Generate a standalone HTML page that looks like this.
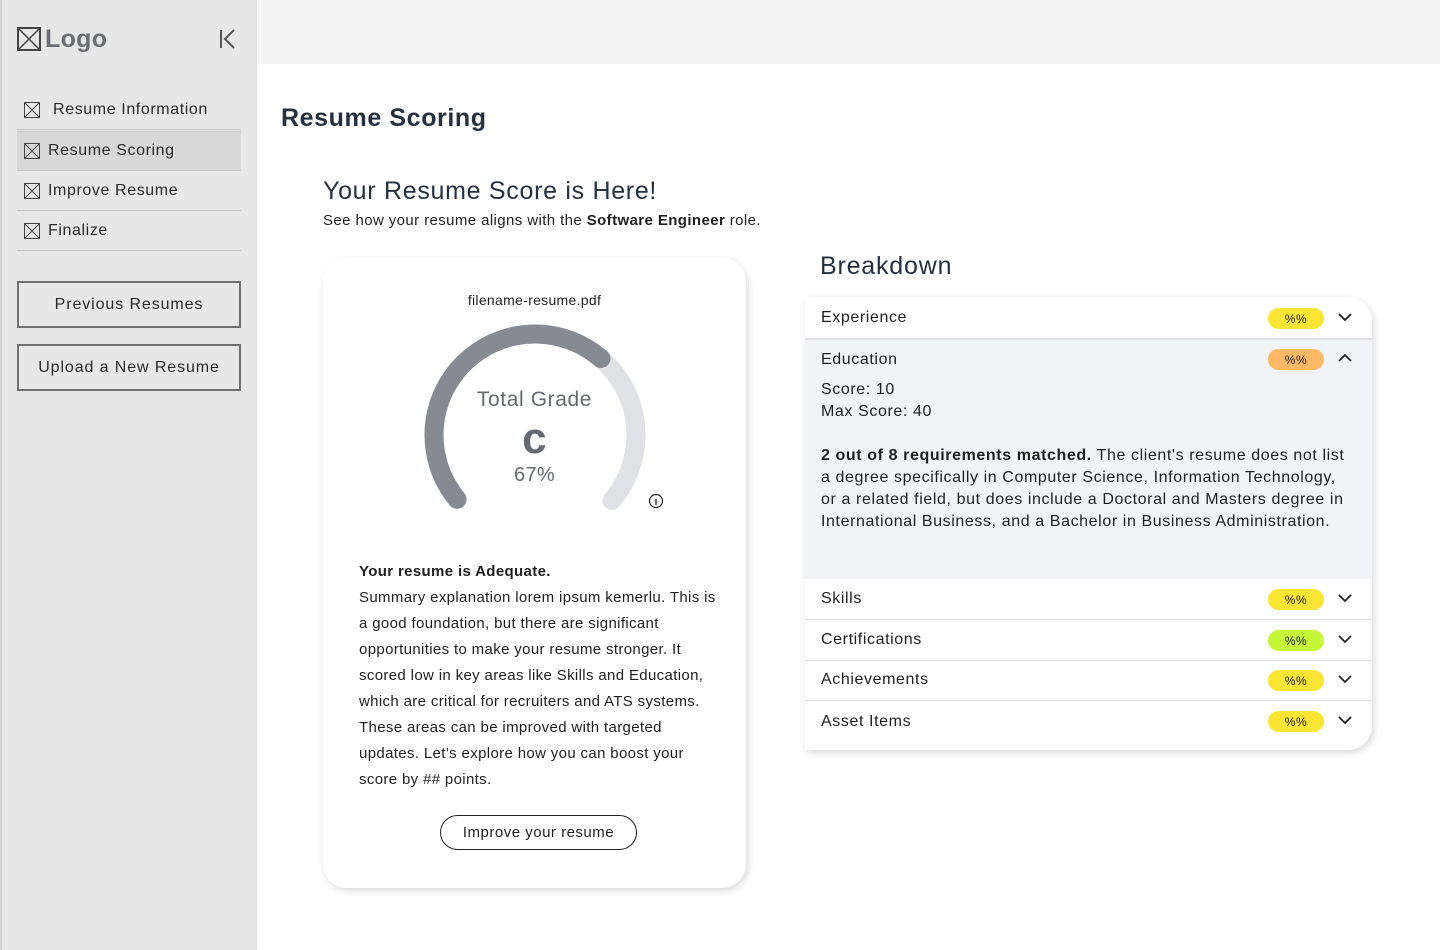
<!DOCTYPE html><html><head><style>
*{box-sizing:border-box;margin:0;padding:0}
body{width:1440px;height:950px;position:relative;background:#fff;font-family:"Liberation Sans",sans-serif;color:#1f1f1f;overflow:hidden;letter-spacing:.3px}
.side{position:absolute;left:0;top:0;width:257px;height:950px;background:#e7e7e7;border-left:2px solid #d5d5d5;border-right:1px solid #ddd}
.top{position:absolute;left:257px;top:0;right:0;height:64px;background:#f4f4f4}
.ab{position:absolute}
.nav{position:absolute;left:17px;width:224px;height:40px;border-bottom:1px solid #c4c4c4;font-size:16px;display:flex;align-items:center;padding-left:7px;color:#2a2a2a;letter-spacing:.6px}
.nav svg{margin-right:8px}
.btn{position:absolute;left:17px;width:224px;height:47px;border:2px solid #707070;font-size:16px;display:flex;align-items:center;justify-content:center;letter-spacing:.9px;color:#2a2a2a}
.row{position:absolute;left:805px;width:567px;height:41px;border-bottom:1px solid #ddd;font-size:16px;display:flex;align-items:center;padding-left:16px;letter-spacing:.6px}
.pill{position:absolute;left:463px;top:10px;width:56px;height:21px;border-radius:11px;font-size:12px;display:flex;align-items:center;justify-content:center}
.chev{position:absolute;left:532px;top:13px}
</style></head><body>
<div class="side"></div>
<div class="top"></div>
<svg class="ab" style="left:17px;top:27px" width="24" height="24"><rect x="1" y="1" width="22" height="22" fill="none" stroke="#444" stroke-width="2"/><path d="M1 1L23 23M23 1L1 23" stroke="#444" stroke-width="1.5"/></svg>
<div class="ab" style="left:45px;top:25px;font-size:25px;font-weight:bold;color:#6b6e73">Logo</div>
<svg class="ab" style="left:219px;top:29px" width="18" height="20"><path d="M2 1V19M15 1L6 10L15 19" fill="none" stroke="#555" stroke-width="2"/></svg>
<div class="nav" style="top:90px"><svg width="16" height="16"><rect x=".5" y=".5" width="15" height="15" fill="none" stroke="#444"/><path d="M1 1L15 15M15 1L1 15" stroke="#444"/></svg>&nbsp;Resume Information</div>
<div class="nav" style="top:131px;background:#d8d8d8;border-top:1px solid #c4c4c4"><svg width="16" height="16"><rect x=".5" y=".5" width="15" height="15" fill="none" stroke="#444"/><path d="M1 1L15 15M15 1L1 15" stroke="#444"/></svg>Resume Scoring</div>
<div class="nav" style="top:171px"><svg width="16" height="16"><rect x=".5" y=".5" width="15" height="15" fill="none" stroke="#444"/><path d="M1 1L15 15M15 1L1 15" stroke="#444"/></svg>Improve Resume</div>
<div class="nav" style="top:211px"><svg width="16" height="16"><rect x=".5" y=".5" width="15" height="15" fill="none" stroke="#444"/><path d="M1 1L15 15M15 1L1 15" stroke="#444"/></svg>Finalize</div>
<div class="btn" style="top:281px">Previous Resumes</div>
<div class="btn" style="top:344px">Upload a New Resume</div>

<div class="ab" style="left:281px;top:104px;font-size:25px;font-weight:bold;color:#253040;letter-spacing:.6px">Resume Scoring</div>
<div class="ab" style="left:323px;top:177px;font-size:25px;color:#253040;letter-spacing:.7px">Your Resume Score is Here!</div>
<div class="ab" style="left:323px;top:212px;font-size:15px;letter-spacing:.4px">See how your resume aligns with the <b>Software Engineer</b> role.</div>

<div class="ab" style="left:323px;top:258px;width:423px;height:630px;border-radius:24px;background:#fff;box-shadow:2px 3px 8px rgba(0,0,0,.15)"></div>
<div class="ab" style="left:323px;top:292px;width:423px;text-align:center;font-size:14px">filename-resume.pdf</div>
<svg class="ab" style="left:420px;top:320px" width="260" height="220">
<g transform="translate(115,115) rotate(140.5)"><circle r="101" fill="none" stroke="#dfe1e5" stroke-width="19" stroke-linecap="round" stroke-dasharray="458 1000"/><circle r="101" fill="none" stroke="#858a93" stroke-width="19" stroke-linecap="round" stroke-dasharray="300 1000"/></g>
<circle cx="236" cy="181" r="6.5" fill="none" stroke="#222" stroke-width="1.2"/><path d="M236 179V185M236 177.3v.1" stroke="#222" stroke-width="1.4"/>
</svg>
<div class="ab" style="left:323px;top:388px;width:423px;text-align:center;font-size:21px;color:#666a70;letter-spacing:.6px">Total Grade</div>
<div class="ab" style="left:323px;top:414px;width:423px;text-align:center;font-size:44px;font-weight:bold;color:#666a70">c</div>
<div class="ab" style="left:323px;top:464px;width:423px;text-align:center;font-size:20px;color:#666a70">67%</div>
<div class="ab" style="left:359px;top:559px;width:362px;font-size:15px;line-height:26px;letter-spacing:.35px"><b>Your resume is Adequate.</b><br>Summary explanation lorem ipsum kemerlu. This is a good foundation, but there are significant opportunities to make your resume stronger. It scored low in key areas like Skills and Education, which are critical for recruiters and ATS systems. These areas can be improved with targeted updates. Let’s explore how you can boost your score by ## points.</div>
<div class="ab" style="left:440px;top:815px;width:197px;height:35px;border:1px solid #222;border-radius:18px;font-size:15px;display:flex;align-items:center;justify-content:center;letter-spacing:.5px">Improve your resume</div>

<div class="ab" style="left:820px;top:252px;font-size:25px;color:#253040;letter-spacing:.8px">Breakdown</div>
<div class="ab" style="left:805px;top:297px;width:567px;height:453px;border-radius:0 24px 24px 0;background:#fff;box-shadow:2px 3px 8px rgba(0,0,0,.15)"></div>
<div class="row" style="top:298px;border-radius:0 24px 0 0">Experience<div class="pill" style="background:#fae535">%%</div><svg class="chev" width="16" height="12"><path d="M2 3L8 9L14 3" fill="none" stroke="#222" stroke-width="1.8"/></svg></div>
<div class="ab" style="left:805px;top:339px;width:567px;height:240px;background:#f2f3f7;border-top:1px solid #ddd"></div>
<div class="row" style="top:339px;border:none">Education<div class="pill" style="background:#ffb864">%%</div><svg class="chev" width="16" height="12"><path d="M2 9L8 3L14 9" fill="none" stroke="#222" stroke-width="1.8"/></svg></div>
<div class="ab" style="left:821px;top:379px;width:532px;font-size:16px;line-height:22px;letter-spacing:.6px">Score: 10<br>Max Score: 40<br><br><b>2 out of 8 requirements matched.</b> The client's resume does not list a degree specifically in Computer Science, Information Technology, or a related field, but does include a Doctoral and Masters degree in International Business, and a Bachelor in Business Administration.</div>
<div class="row" style="top:579px">Skills<div class="pill" style="background:#fae535">%%</div><svg class="chev" width="16" height="12"><path d="M2 3L8 9L14 3" fill="none" stroke="#222" stroke-width="1.8"/></svg></div>
<div class="row" style="top:620px">Certifications<div class="pill" style="background:#c7f538">%%</div><svg class="chev" width="16" height="12"><path d="M2 3L8 9L14 3" fill="none" stroke="#222" stroke-width="1.8"/></svg></div>
<div class="row" style="top:660px">Achievements<div class="pill" style="background:#fae535">%%</div><svg class="chev" width="16" height="12"><path d="M2 3L8 9L14 3" fill="none" stroke="#222" stroke-width="1.8"/></svg></div>
<div class="row" style="top:701px;border:none">Asset Items<div class="pill" style="background:#fae535">%%</div><svg class="chev" width="16" height="12"><path d="M2 3L8 9L14 3" fill="none" stroke="#222" stroke-width="1.8"/></svg></div>
</body></html>
